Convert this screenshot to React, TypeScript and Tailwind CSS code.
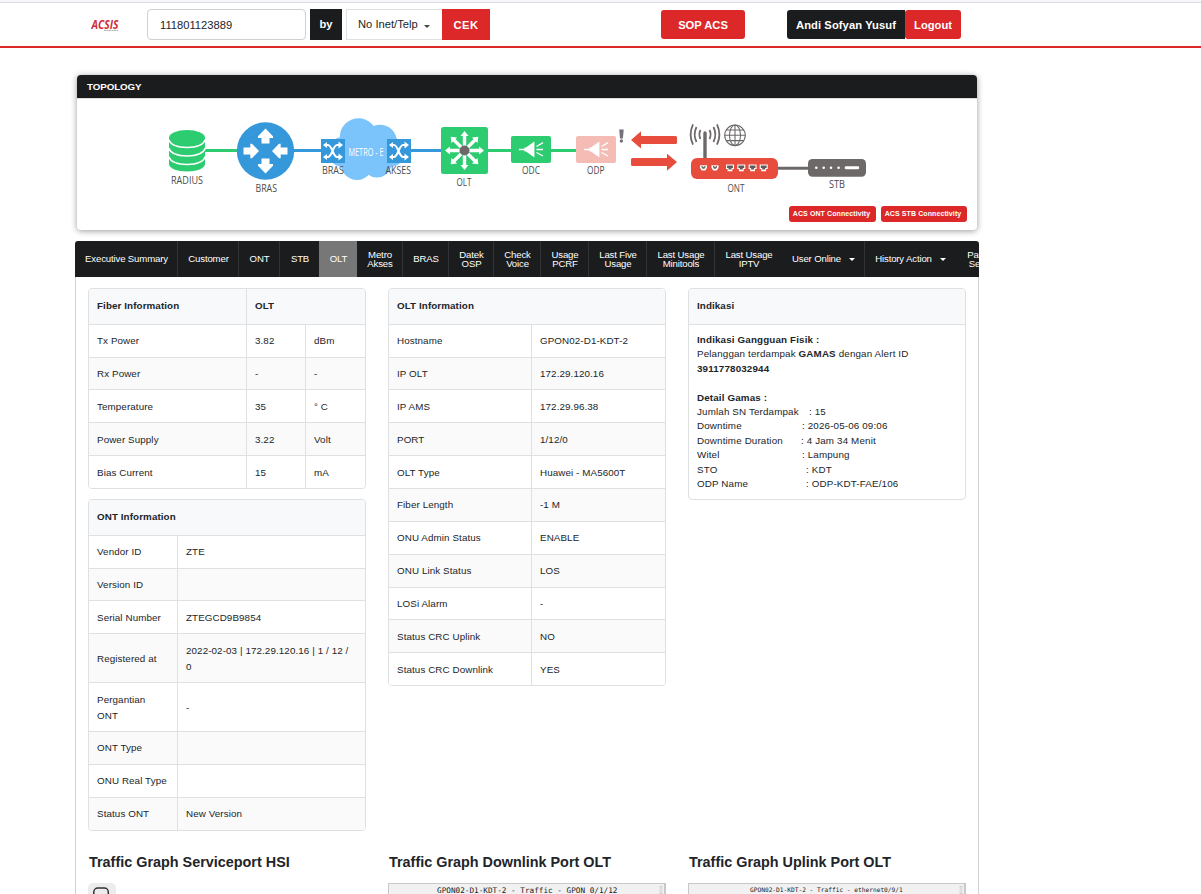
import type { ReactNode } from "react";

type NavItem = { lines: string[]; width: string; active?: boolean; divider?: boolean; caret?: boolean };

const NAV: NavItem[] = [
  { lines: ["Executive Summary"], width: "w-[103px]", divider: true },
  { lines: ["Customer"], width: "w-[61px]", divider: true },
  { lines: ["ONT"], width: "w-[41px]", divider: true },
  { lines: ["STB"], width: "w-[39px]" },
  { lines: ["OLT"], width: "w-[38px]", active: true },
  { lines: ["Metro", "Akses"], width: "w-[46px]", divider: true },
  { lines: ["BRAS"], width: "w-[46px]", divider: true },
  { lines: ["Datek", "OSP"], width: "w-[45px]", divider: true },
  { lines: ["Check", "Voice"], width: "w-[47px]", divider: true },
  { lines: ["Usage", "PCRF"], width: "w-[48px]", divider: true },
  { lines: ["Last Five", "Usage"], width: "w-[58px]", divider: true },
  { lines: ["Last Usage", "Minitools"], width: "w-[68px]", divider: true },
  { lines: ["Last Usage", "IPTV"], width: "w-[67px]" },
  { lines: ["User Online"], width: "w-[83px]", divider: true, caret: true },
  { lines: ["History Action"], width: "w-[90px]", caret: true },
  { lines: ["Par", "Se"], width: "w-[38px]" },
];

function Caret({ className }: { className: string }) {
  return (
    <svg className={className} width="6" height="3" viewBox="0 0 6 3">
      <path d="M0 0H6L3 3Z" fill="currentColor" />
    </svg>
  );
}

function Card({ children, className = "" }: { children: ReactNode; className?: string }) {
  return <div className={`overflow-hidden rounded-[4px] border border-[#dee0e1] ${className}`}>{children}</div>;
}

type Row = { cells: string[]; height?: string; low?: boolean };

function DataTable({ head, rows, widths, headWidths }: { head: string[]; rows: Row[]; widths: string[]; headWidths: string[] }) {
  return (
    <Card>
      <div className="flex h-[35px] bg-[#f8f9fb] font-bold">
        {head.map((h, i) => (
          <div key={h} className={`flex items-center px-2 ${headWidths[i]} ${i > 0 ? "border-l border-[#dee0e1]" : ""}`}>
            {h}
          </div>
        ))}
      </div>
      {rows.map((r, i) => (
        <div
          key={r.cells[0]}
          className={`flex border-t border-[#dee0e1] ${r.height ?? "h-[33px]"} ${i % 2 ? "bg-[#fafafa]" : "bg-white"}`}
        >
          {r.cells.map((c, j) => (
            <div
              key={j}
              className={`flex items-center whitespace-pre-line px-2 leading-4 ${r.low ? "pt-0.5" : ""} ${widths[j]} ${j > 0 ? "border-l border-[#dee0e1]" : ""}`}
            >
              {c}
            </div>
          ))}
        </div>
      ))}
    </Card>
  );
}

const FIBER: Row[] = [
  { cells: ["Tx Power", "3.82", "dBm"] },
  { cells: ["Rx Power", "-", "-"], height: "h-8" },
  { cells: ["Temperature", "35", "° C"], low: true },
  { cells: ["Power Supply", "3.22", "Volt"], low: true },
  { cells: ["Bias Current", "15", "mA"], low: true },
];

const ONT: Row[] = [
  { cells: ["Vendor ID", "ZTE"] },
  { cells: ["Version ID", ""], height: "h-8" },
  { cells: ["Serial Number", "ZTEGCD9B9854"], low: true },
  { cells: ["Registered at", "2022-02-03 | 172.29.120.16 | 1 / 12 /\n0"], height: "h-[49px]", low: true },
  { cells: ["Pergantian\nONT", "-"], height: "h-[49px]", low: true },
  { cells: ["ONT Type", ""] },
  { cells: ["ONU Real Type", ""] },
  { cells: ["Status ONT", "New Version"] },
];

const OLT: Row[] = [
  { cells: ["Hostname", "GPON02-D1-KDT-2"] },
  { cells: ["IP OLT", "172.29.120.16"], height: "h-8" },
  { cells: ["IP AMS", "172.29.96.38"], low: true },
  { cells: ["PORT", "1/12/0"], low: true },
  { cells: ["OLT Type", "Huawei - MA5600T"], low: true },
  { cells: ["Fiber Length", "-1 M"] },
  { cells: ["ONU Admin Status", "ENABLE"] },
  { cells: ["ONU Link Status", "LOS"] },
  { cells: ["LOSi Alarm", "-"], height: "h-8" },
  { cells: ["Status CRC Uplink", "NO"], low: true },
  { cells: ["Status CRC Downlink", "YES"], low: true },
];

const GAMAS = [
  { label: "Jumlah SN Terdampak", value: "15", width: "w-[112px]" },
  { label: "Downtime", value: "2026-05-06 09:06", width: "w-[105px]" },
  { label: "Downtime Duration", value: "4 Jam 34 Menit", width: "w-[104px]" },
  { label: "Witel", value: "Lampung", width: "w-[105px]" },
  { label: "STO", value: "KDT", width: "w-[109px]" },
  { label: "ODP Name", value: "ODP-KDT-FAE/106", width: "w-[109px]" },
];

function Label({ x, y, w, children, fill = "#4c4c4c" }: { x: number; y: number; w: number; children: string; fill?: string }) {
  return (
    <text x={x} y={y} textLength={w} lengthAdjust="spacingAndGlyphs" fontSize="10" fill={fill} fontFamily="'Open Sans', 'Noto Sans', sans-serif">
      {children}
    </text>
  );
}

function Shuffle({ x }: { x: number }) {
  return (
    <g transform={`translate(${x} 139)`}>
      <rect width="24" height="24" fill="#3498db" />
      <g fill="none" stroke="#fff" strokeWidth="2">
        <path d="M3.500 6H7C11 6 12 18 16 18H19M3.500 18H7C11 18 12 6 16 6H19" />
      </g>
      <path d="M17.500 2.500L22 6L17.500 9.500ZM17.500 14.500L22 18L17.500 21.500ZM6 3L2 6L6 9ZM6 15L2 18L6 21Z" fill="#fff" />
    </g>
  );
}

function Splitter({ x, fill }: { x: number; fill: string }) {
  return (
    <g transform={`translate(${x} 136)`}>
      <rect width="40" height="27" rx="2" fill={fill} />
      <path d="M13.500 11.500H15L23.400 5.500V21.500L15 15.500H13.500Z" fill="#fff" />
      <path d="M8 13.500H14M25.500 10.500L32 6.700M25.500 13.500H32M25.500 16.500L32 20" stroke="#fff" strokeWidth="1.400" />
    </g>
  );
}

function Topology() {
  return (
    <svg width="900" height="107" viewBox="77 99 900 107" className="block">
      <g fill="none" strokeWidth="3">
        <path d="M204 150.500H238M487 150.500H577" stroke="#2ecc71" />
        <path d="M293 150.500H442" stroke="#3498db" />
        <path d="M777 168.300H809" stroke="#6d6969" />
      </g>

      <path d="M169 138V164C169 168.500 177 171.500 187 171.500S205 168.500 205 164V138Z" fill="#2ecc71" />
      <ellipse cx="187" cy="138" rx="18" ry="8" fill="#2ecc71" />
      <g fill="none" stroke="#fff" strokeWidth="1.600">
        <path d="M168.500 139.500C171 145.500 178 147.500 187 147.500S203 145.500 205.500 139.500" />
        <path d="M168.500 148C171 154 178 156 187 156S203 154 205.500 148" />
        <path d="M168.500 156.500C171 162.500 178 164.500 187 164.500S203 162.500 205.500 156.500" />
      </g>
      <Label x={171} y={184} w={32}>RADIUS</Label>

      <circle cx="265.500" cy="151" r="28.700" fill="#3498db" />
      <g fill="#fff">
        <path d="M265.500 128.500L273 136.300V138H269.500V143.500H261.500V138H258V136.300Z" />
        <path d="M265.500 173.500L273 165.700V164H269.500V158.500H261.500V164H258V165.700Z" />
        <path d="M259 151L252 143.800H250.300V147.500H243.500V154.500H250.300V158.200H252Z" />
        <path d="M272 151L279 143.800H280.700V147.500H287.500V154.500H280.700V158.200H279Z" />
      </g>
      <Label x={255.500} y={192} w={21.500}>BRAS</Label>

      <g fill="#7ac3fb">
        <circle cx="358.500" cy="137" r="18.700" />
        <circle cx="380" cy="141.500" r="16.800" />
        <circle cx="343" cy="152" r="15" />
        <circle cx="390" cy="152" r="15" />
        <circle cx="357" cy="164" r="16" />
        <circle cx="377" cy="163" r="14.500" />
        <rect x="345" y="140" width="46" height="28" />
      </g>
      <Shuffle x={321} />
      <Shuffle x={387} />
      <Label x={348.500} y={155.500} w={35} fill="#fff">METRO - E</Label>
      <Label x={322} y={174} w={22}>BRAS</Label>
      <Label x={385.500} y={174} w={25.500}>AKSES</Label>

      <rect x="441" y="127" width="47" height="47" rx="2.500" fill="#2ecc71" />
      <g fill="#fff" transform="translate(464.500 150.500)">
        {[0, 45, 90, 135, 180, 225, 270, 315].map((a) => (
          <path key={a} transform={`rotate(${a})`} d="M0 -19.500L4 -14.500H1.700V-3H-1.700V-14.500H-4Z" />
        ))}
      </g>
      <circle cx="464.500" cy="150.500" r="5" fill="#6d6969" />
      <Label x={456.500} y={186} w={15}>OLT</Label>

      <Splitter x={511} fill="#2ecc71" />
      <Label x={522} y={174} w={18}>ODC</Label>
      <Splitter x={576} fill="#f5bcb6" />
      <Label x={587} y={174} w={17.500}>ODP</Label>
      <path d="M619.200 129.500H623.700L622.900 138.500H620Z" fill="#75707a" />
      <circle cx="621.400" cy="141" r="1.700" fill="#75707a" />

      <path d="M631 140L641 131.300V136H675.500Q677 136 677 137.500V142.500Q677 144 675.500 144H641V148.500Z" fill="#e74c3c" />
      <path d="M677 162L667 153.700V158H632.500Q631 158 631 159.500V164.500Q631 166 632.500 166H667V170.800Z" fill="#e74c3c" />

      <path d="M705 133V159" stroke="#6d6969" strokeWidth="3.400" strokeLinecap="round" />
      <g fill="none" stroke="#6d6969" strokeWidth="1.800">
        <path d="M700.500 130Q698.300 134.500 700.500 139M696.500 127Q692.800 134.500 696.500 142M693 124.300Q688.300 134.500 693 144.700" />
        <path d="M709.500 130Q711.700 134.500 709.500 139M713.500 127Q717.200 134.500 713.500 142M717 124.300Q721.700 134.500 717 144.700" />
      </g>
      <g fill="none" stroke="#6d6969" strokeWidth="1.100">
        <circle cx="735" cy="135.300" r="10.300" />
        <ellipse cx="735" cy="135.300" rx="5.500" ry="10.300" />
        <path d="M735 125V145.600M724.700 135.300H745.300M726.200 130H743.800M726.200 140.600H743.800" />
      </g>
      <rect x="691" y="158" width="87" height="21" rx="6" fill="#e74c3c" />
      {[703.500, 715].map((x) => (
        <g key={x} transform={`translate(${x} 167.700)`}>
          <path d="M-3.500 -2.500H3.500V0L1.800 2.700H-1.800L-3.500 0Z" fill="#fff" />
          <path d="M-2 -2.200V-0.500L-1 1H1L2 -0.500V-2.200L0 -0.800Z" fill="#6d6969" />
        </g>
      ))}
      {[730, 741.300, 752.600, 763.700].map((x) => (
        <g key={x} transform={`translate(${x} 167.700)`}>
          <path d="M-4 -3.200H4V1.200H2.400V3.500H-2.400V1.200H-4Z" fill="#fff" />
          <path d="M-2.900 -2.200H2.900V0.300H1.500V1.800H-1.500V0.300H-2.900Z" fill="#5f5b5b" />
        </g>
      ))}
      <Label x={727.500} y={192} w={17}>ONT</Label>

      <rect x="808" y="159" width="58" height="17.700" rx="4.500" fill="#6d6969" />
      {[816.300, 823.700, 831, 838.600].map((x) => (
        <circle key={x} cx={x} cy="167.800" r="1.300" fill="#fff" />
      ))}
      <rect x="844.700" y="166.300" width="14.500" height="3" rx="1.400" fill="#fff" />
      <Label x={829} y={188} w={16}>STB</Label>
    </svg>
  );
}

function Header() {
  return (
    <header className="flex h-12 items-start border-b-2 border-[#dc2828] pl-[91px]">
      <svg width="56" height="43" viewBox="91 3 56 43" className="mt-[3px] shrink-0">
        <text x="91.500" y="28.500" textLength="27" lengthAdjust="spacingAndGlyphs" fontSize="12" fontWeight="700" fontStyle="italic" fill="#cf2f38" fontFamily="'Open Sans', sans-serif">
          ACSIS
        </text>
        <path d="M104 30.400H118" stroke="#a9a0a0" strokeWidth="0.900" strokeDasharray="2 0.500" />
      </svg>
      <div className="mt-[9px] flex h-[31px] text-[11.200px] text-[#212529]">
        <input
          className="mr-1 w-[159px] rounded-[4px] border border-[#ced0d2] pl-3 pt-px text-[11.200px] outline-none"
          defaultValue="111801123889"
        />
        <span className="mr-1 flex w-8 items-center justify-center bg-[#1b1c1e] font-bold text-white">by</span>
        <span className="flex w-24 items-center border border-r-0 border-[#dee0e1] pl-[11px]">
          No Inet/Telp
          <Caret className="ml-1.5 mt-1 text-[#444]" />
        </span>
        <span className="flex w-12 items-center justify-center bg-[#dc2828] pt-px font-bold tracking-[0.4px] text-white">CEK</span>
      </div>
      <div className="ml-[171px] mt-2.5 flex h-[29px] text-[11.200px] font-bold text-white">
        <span className="flex w-[84px] items-center justify-center rounded-[3px] bg-[#dc2828] pt-0.5">SOP ACS</span>
        <span className="ml-[42px] flex w-[118px] items-center justify-center rounded-l-[3px] bg-[#1b1c1e] pt-0.5 tracking-[0.080px]">Andi Sofyan Yusuf</span>
        <span className="flex w-14 items-center justify-center rounded-[3px] bg-[#dc2828] pt-0.5">Logout</span>
      </div>
    </header>
  );
}

function Graph({ title, className }: { title: string; className: string }) {
  return (
    <div className={`flex h-[11px] items-start overflow-hidden border border-b-0 border-r-2 border-[#c8c8c8] bg-[#f1f1f1] font-['DejaVu_Sans_Mono',monospace] text-[#222] ${className}`}>
      <span className="flex-1 whitespace-nowrap">{title}</span>
      <svg width="4" height="10" viewBox="0 0 4 10" className="mr-px mt-px">
        <path d="M0.500 1.500H3.500M0.500 3H3.500M0.500 5H3.500M0.500 7H3.500M0.500 8.500H3.500" stroke="#c4c4c4" strokeWidth="0.800" />
      </svg>
    </div>
  );
}

export default function App() {
  return (
    <div className="flex h-[894px] flex-col overflow-hidden bg-white font-['Liberation_Sans',Arial,sans-serif] text-[#212529]">
      <div className="h-[3px] shrink-0 border-b border-[#dcdde0] bg-[#f6f7f9]" />
      <div className="-mt-[3px] shrink-0">
        <Header />
      </div>
      <section className="ml-[77px] mt-[27px] h-[155px] w-[900px] shrink-0 overflow-hidden rounded-[4px] shadow-[0_1px_6px_rgba(0,0,0,0.4)]">
        <h2 className="flex h-6 items-center border-b border-[#dcdcdc] bg-[#1b1c1e] pl-2.5 pt-px text-[9.800px] font-bold tracking-[-0.100px] text-white">TOPOLOGY</h2>
        <Topology />
        <div className="mr-2.5 flex justify-end gap-[5px] text-[7px] font-bold tracking-[0.100px] text-white">
          <span className="flex h-4 w-[87px] items-center justify-center rounded-[3px] bg-[#dc2828] pt-px pr-0.5">ACS ONT Connectivity</span>
          <span className="flex h-4 w-[86px] items-center justify-center rounded-[3px] bg-[#dc2828] pt-px pr-0.5">ACS STB Connectivity</span>
        </div>
      </section>

      <nav className="ml-[75px] mt-[11px] flex h-9 w-[904px] shrink-0 overflow-hidden rounded-t-[3px] bg-[#1b1c1e] text-[9.600px] leading-[9px] tracking-[-0.150px] text-white">
        {NAV.map((n) => (
          <a
            key={n.lines.join(" ")}
            className={`flex shrink-0 items-center justify-center whitespace-nowrap pl-px text-center ${n.lines.length === 1 ? "pb-0.5" : ""} ${n.width} ${n.active ? "bg-[#777]" : ""} ${n.divider ? "border-r border-[#323335]" : ""}`}
          >
            <span>
              {n.lines.map((l) => (
                <span key={l} className="block">
                  {l}
                </span>
              ))}
            </span>
            {n.caret && <Caret className="ml-2 mt-[3px]" />}
          </a>
        ))}
      </nav>

      <main className="ml-[75px] w-[904px] flex-1 border-x border-[#d0d2d4] pl-3 pt-[11px] text-[9.800px] tracking-[0.100px]">
        <div className="flex h-[566px] items-start gap-[22px]">
          <div className="flex w-[278px] flex-col gap-2.5">
            <DataTable head={["Fiber Information", "OLT"]} headWidths={["w-[157px]", "flex-1"]} rows={FIBER} widths={["w-[157px]", "w-[59px]", "flex-1"]} />
            <DataTable head={["ONT Information"]} headWidths={["flex-1"]} rows={ONT} widths={["w-[88px]", "flex-1"]} />
          </div>
          <div className="w-[278px]">
            <DataTable head={["OLT Information"]} headWidths={["flex-1"]} rows={OLT} widths={["w-[142px]", "flex-1"]} />
          </div>
          <Card className="h-[212px] w-[278px]">
            <div className="flex h-9 items-center border-b border-[#dee0e1] bg-[#f8f9fb] px-2 font-bold">Indikasi</div>
            <div className="px-2 pt-2 leading-[14.400px] tracking-[0.150px]">
              <p className="font-bold">Indikasi Gangguan Fisik :</p>
              <p>
                Pelanggan terdampak <b>GAMAS</b> dengan Alert ID
              </p>
              <p className="mb-[14.400px] font-bold">3911778032944</p>
              <p className="font-bold">Detail Gamas :</p>
              {GAMAS.map((g) => (
                <div key={g.label} className="flex">
                  <span className={g.width}>{g.label}</span>
                  <span>: {g.value}</span>
                </div>
              ))}
            </div>
          </Card>
        </div>

        <div className="flex gap-[22px] tracking-normal">
          <div className="w-[278px]">
            <h3 className="h-[29px] whitespace-nowrap pl-px text-[14.400px] font-bold leading-4">Traffic Graph Serviceport HSI</h3>
            <div className="h-[11px] w-7 overflow-hidden rounded-t-[5px] bg-[#ececec]">
              <svg width="28" height="11" viewBox="0 0 28 11">
                <rect x="5.800" y="5" width="14.500" height="14" rx="4" fill="none" stroke="#333" strokeWidth="1.500" />
              </svg>
            </div>
          </div>
          <div className="w-[278px]">
            <h3 className="h-[29px] whitespace-nowrap pl-px text-[14.400px] font-bold leading-4">Traffic Graph Downlink Port OLT</h3>
            <Graph title="GPON02-D1-KDT-2 - Traffic - GPON 0/1/12" className="pl-12 text-[7.700px] leading-[13px]" />
          </div>
          <div className="w-[278px]">
            <h3 className="h-[29px] whitespace-nowrap pl-px text-[14.400px] font-bold leading-4">Traffic Graph Uplink Port OLT</h3>
            <Graph title="GPON02-D1-KDT-2 - Traffic - ethernet0/9/1" className="pl-[61px] text-[6.200px] leading-[12px]" />
          </div>
        </div>
      </main>
    </div>
  );
}
